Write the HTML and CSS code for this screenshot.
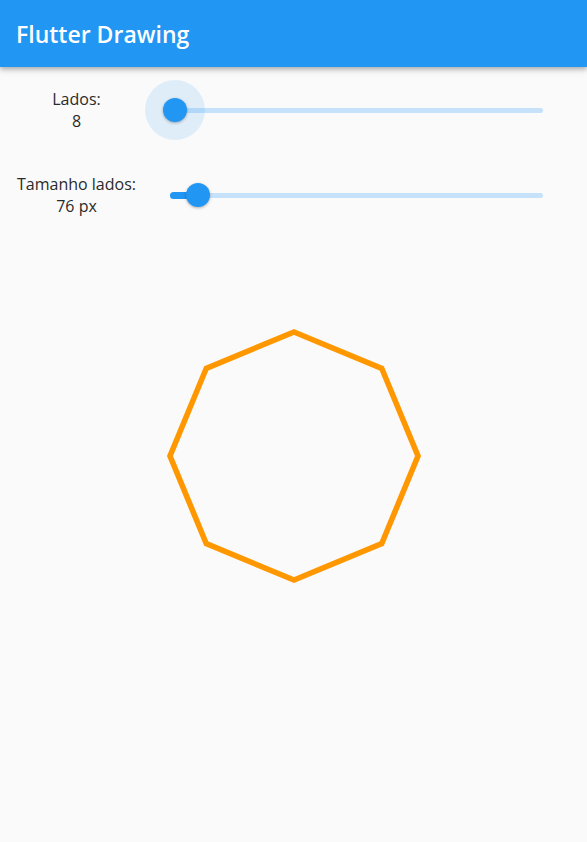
FILE: index.html
```html
<!DOCTYPE html>
<html lang="pt">
<head>
<meta charset="utf-8">
<title>Flutter Drawing</title>
<link rel="stylesheet" href="styles.css">
</head>
<body>
<header class="appbar">
  <h1 class="appbar-title">Flutter Drawing</h1>
</header>
<main class="content">
  <section class="controls">
    <div class="control-row">
      <div class="control-label">Lados:<br>8</div>
      <div class="slider">
        <div class="slider-track">
          <div class="slider-active" style="width: 5px"></div>
          <div class="slider-halo" style="left: 5px"></div>
          <div class="slider-thumb" style="left: 5px"></div>
        </div>
      </div>
    </div>
    <div class="control-row">
      <div class="control-label">Tamanho lados:<br>76 px</div>
      <div class="slider">
        <div class="slider-track">
          <div class="slider-active" style="width: 28px"></div>
          <div class="slider-thumb" style="left: 28px"></div>
        </div>
      </div>
    </div>
  </section>
  <div class="canvas">
    <svg class="shape" width="260" height="260" viewBox="0 0 260 260">
      <polygon points="130,6 217.7,42.3 254,130 217.7,217.7 130,254 42.3,217.7 6,130 42.3,42.3" fill="none" stroke="#FF9800" stroke-width="5.6" stroke-linejoin="miter"/>
    </svg>
  </div>
</main>
</body>
</html>
```
FILE: styles.css
```css
* { box-sizing: border-box; }
html, body { margin: 0; padding: 0; }
body {
  background: #FAFAFA;
  font-family: "Open Sans", "Noto Sans", "Liberation Sans", sans-serif;
  color: #212121;
  width: 587px;
  height: 842px;
  overflow: hidden;
}
.appbar {
  height: 67px;
  background: #2196F3;
  display: flex;
  align-items: center;
  padding-left: 16px;
  box-shadow: 0 2px 4px rgba(0,0,0,0.2), 0 4px 6px rgba(0,0,0,0.12);
  position: relative;
  z-index: 1;
}
.appbar-title {
  margin: 0;
  color: #fff;
  font-size: 23px;
  font-weight: 600;
  letter-spacing: 0;
}
.controls {
  padding-top: 13px;
  display: flex;
  flex-direction: column;
  gap: 25px;
}
.control-row {
  height: 60px;
  display: flex;
  align-items: center;
}
.control-label {
  width: 153px;
  text-align: center;
  font-size: 16px;
  line-height: 22px;
  color: #2a2a2a;
}
.slider {
  flex: 1;
  padding-left: 17px;
  padding-right: 44px;
}
.slider-track {
  position: relative;
  height: 5px;
  border-radius: 3px;
  background: #C5E2FA;
}
.slider-active {
  position: absolute;
  left: 0;
  top: -1px;
  height: 7px;
  border-radius: 4px;
  background: #2196F3;
}
.slider-halo {
  position: absolute;
  top: 50%;
  width: 60px;
  height: 60px;
  margin-left: -30px;
  margin-top: -30px;
  border-radius: 50%;
  background: rgba(33,150,243,0.12);
}
.slider-thumb {
  position: absolute;
  top: 50%;
  width: 24px;
  height: 24px;
  margin-left: -12px;
  margin-top: -12px;
  border-radius: 50%;
  background: #2196F3;
  box-shadow: 0 1px 3px rgba(0,0,0,0.3);
}
.canvas {
  display: flex;
  justify-content: center;
  margin-top: 101px;
}
.shape { display: block; }
```
